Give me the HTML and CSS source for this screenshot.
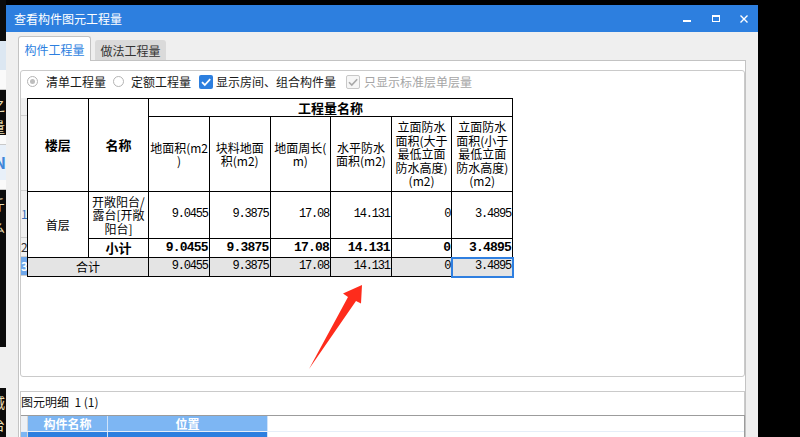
FILE: index.html
```html
<!DOCTYPE html>
<html>
<head>
<meta charset="utf-8">
<title>查看构件图元工程量</title>
<link rel="stylesheet" href="styles.css">
</head>
<body>
<div class="screen">
  <div class="desk">
    <div class="d d-black h41"></div>
    <div class="d d-light h29"></div>
    <div class="d d-white h20"></div>
    <div class="d d-black h45 glyphs"><span>之</span><span>量</span></div>
    <div class="d d-white h10"></div>
    <div class="d d-blue h35"><span class="dn">N</span></div>
    <div class="d d-white h10"></div>
    <div class="d d-black h157 glyphs"><span>斤</span><span>么</span></div>
    <div class="d d-gray h41"></div>
    <div class="d d-black fill glyphs"><span>城</span><span>台</span></div>
  </div>

  <div class="window">
    <div class="titlebar">
      <span class="title">查看构件图元工程量</span>
      <div class="controls">
        <svg class="ctl" width="8" height="8" viewBox="0 0 8 8"><rect x="0" y="5" width="8" height="2" fill="#fff"/></svg>
        <svg class="ctl" width="8" height="8" viewBox="0 0 8 8"><rect x="0.5" y="0.5" width="7" height="6" fill="none" stroke="#fff" stroke-width="1"/><rect x="0" y="0" width="8" height="2" fill="#fff"/></svg>
        <svg class="ctl" width="8" height="8" viewBox="0 0 8 8"><path d="M0.5 0.5 L7.5 7.5 M7.5 0.5 L0.5 7.5" stroke="#fff" stroke-width="1.4" fill="none"/></svg>
      </div>
    </div>

    <div class="wbody">
      <div class="tabs">
        <div class="tab active">构件工程量</div>
        <div class="tab">做法工程量</div>
      </div>

      <div class="panel">
        <div class="group">
          <div class="options">
            <span class="radio on"></span><span class="lbl l1">清单工程量</span>
            <span class="radio"></span><span class="lbl l2">定额工程量</span>
            <span class="cb on"><svg width="14" height="14" viewBox="0 0 14 14"><path d="M3 7.2 L5.8 10 L11.2 4.2" stroke="#fff" stroke-width="1.8" fill="none"/></svg></span><span class="lbl l3">显示房间、组合构件量</span>
            <span class="cb dis"><svg width="14" height="14" viewBox="0 0 14 14"><path d="M3 7.2 L5.8 10 L11.2 4.2" stroke="#a8a8a8" stroke-width="1.6" fill="none"/></svg></span><span class="lbl dis">只显示标准层单层量</span>
          </div>

          <div class="grid">
            <div class="rowhdr">
              <div class="rh h18"></div>
              <div class="rh h75"></div>
              <div class="rh h47 num1">1</div>
              <div class="rh h19">2</div>
              <div class="rh h19 selrow">3</div>
            </div>
            <table class="qt">
              <tr class="h1">
                <th rowspan="2" class="b">楼层</th>
                <th rowspan="2" class="b">名称</th>
                <th colspan="6" class="b">工程量名称</th>
              </tr>
              <tr class="h2">
                <th>地面积(m2<br>)</th>
                <th>块料地面<br>积(m2)</th>
                <th>地面周长(<br>m)</th>
                <th>水平防水<br>面积(m2)</th>
                <th>立面防水<br>面积(大于<br>最低立面<br>防水高度)<br>(m2)</th>
                <th>立面防水<br>面积(小于<br>最低立面<br>防水高度)<br>(m2)</th>
              </tr>
              <tr class="r1">
                <td rowspan="2" class="ctr">首层</td>
                <td class="ctr name">开敞阳台/<br>露台[开敞<br>阳台]</td>
                <td class="n">9.0455</td>
                <td class="n">9.3875</td>
                <td class="n">17.08</td>
                <td class="n">14.131</td>
                <td class="n">0</td>
                <td class="n">3.4895</td>
              </tr>
              <tr class="r2">
                <td class="ctr b">小计</td>
                <td class="n nb">9.0455</td>
                <td class="n nb">9.3875</td>
                <td class="n nb">17.08</td>
                <td class="n nb">14.131</td>
                <td class="n nb">0</td>
                <td class="n nb">3.4895</td>
              </tr>
              <tr class="r3">
                <td colspan="2" class="ctr">合计</td>
                <td class="n">9.0455</td>
                <td class="n">9.3875</td>
                <td class="n">17.08</td>
                <td class="n">14.131</td>
                <td class="n">0</td>
                <td class="n sel">3.4895</td>
              </tr>
            </table>
          </div>
        </div>

        <div class="splitter"></div>

        <div class="detail">
          <div class="dtitle">图元明细&nbsp;&nbsp;1 (1)</div>
          <div class="dgrid">
            <div class="drow dhead">
              <div class="dstrip"></div>
              <div class="dcell w79">构件名称</div>
              <div class="dcell w160">位置</div>
            </div>
            <div class="drow dsel">
              <div class="dstrip"></div>
              <div class="dcell w79"></div>
              <div class="dcell w160"></div>
            </div>
          </div>
        </div>
      </div>
    </div>
  </div>

  <svg class="arrow" width="800" height="437" viewBox="0 0 800 437">
    <polygon points="309,369 348,297 343,293.5 362,285 361,303.5 356,301" fill="#fe2c1c"/>
  </svg>
</div>
</body>
</html>
```

FILE: styles.css
```css
* { box-sizing: border-box; margin: 0; padding: 0; }
html, body { width: 800px; height: 437px; overflow: hidden; background: #000; }
body {
  font-family: "Noto Sans CJK SC", "Microsoft YaHei", sans-serif;
  font-size: 12px;
  color: #222;
}

.screen {
  position: relative;
  display: flex;
  width: 800px;
  height: 437px;
  background: #000;
  overflow: hidden;
}

/* desktop fragments at left edge */
.desk { width: 6px; flex: none; display: flex; flex-direction: column; overflow: hidden; }
.d { flex: none; overflow: hidden; position: relative; }
.d-black { background: #0b0b0b; }
.d-light { background: #dce7f2; }
.d-white { background: #fafafa; border-bottom: 1px solid #c9c9c9; }
.d-blue { background: #e8f0f9; }
.d-gray { background: #efefef; }
.h41 { height: 41px; }
.h29 { height: 29px; }
.h20 { height: 20px; }
.h45 { height: 45px; }
.h10 { height: 10px; }
.h35 { height: 35px; }
.h157 { height: 157px; }
.fill { flex: 1; }
.glyphs { display: flex; flex-direction: column; padding-top: 6px; gap: 6px; }
.glyphs span { display: block; margin-left: -9px; font-size: 14px; line-height: 16px; color: #e9dcb2; }
.dn { display: block; margin-left: -6px; margin-top: 8px; color: #3f86d8; font-weight: bold; font-size: 16px; line-height: 18px; }

/* window */
.window {
  width: 752px;
  flex: none;
  margin-top: 5px;
  height: 432px;
  display: flex;
  flex-direction: column;
  background: #efefef;
}
.titlebar {
  height: 27px;
  flex: none;
  background: #2d7fdf;
  color: #fff;
  display: flex;
  align-items: center;
  padding-left: 8px;
}
.title { flex: 1; font-size: 12px; line-height: 16px; }
.controls { display: flex; align-items: center; gap: 20px; margin-right: 10px; }
.controls .ctl:first-child { margin-right: 1px; }
.ctl { display: block; }

.wbody {
  flex: 1;
  min-height: 0;
  display: flex;
  flex-direction: column;
  padding: 4px 12px 0 12px;
}

.tabs {
  display: flex;
  align-items: flex-end;
  gap: 4px;
  height: 24px;
  flex: none;
  position: relative;
  z-index: 1;
}
.tab {
  width: 71px;
  height: 20px;
  background: #dadada;
  border-radius: 3px 3px 0 0;
  color: #333;
  display: flex;
  align-items: center;
  justify-content: center;
  font-size: 12px;
}
.tab.active {
  align-self: flex-start;
  width: 73px;
  height: 25px;
  background: #fff;
  border: 1px solid #c3c3c3;
  border-bottom: none;
  color: #2d7fdf;
  padding-top: 1px;
}

.panel {
  flex: 1;
  min-height: 0;
  background: #fff;
  border: 1px solid #c3c3c3;
  border-bottom: none;
  padding: 9px 0 0 1px;
  display: flex;
  flex-direction: column;
}

.group {
  height: 307px;
  flex: none;
  border: 1px solid #cacaca;
  border-radius: 3px;
  display: flex;
  flex-direction: column;
}

.options {
  height: 21px;
  margin-bottom: 6px;
  display: flex;
  align-items: center;
  padding-left: 6px;
  font-size: 12px;
  color: #1a1a1a;
}
.radio {
  width: 11px;
  height: 11px;
  border: 1px solid #b4b4b4;
  border-radius: 50%;
  background: #fff;
  position: relative;
  flex: none;
}
.radio.on::after {
  content: "";
  position: absolute;
  left: 2px; top: 2px;
  width: 5px; height: 5px;
  border-radius: 50%;
  background: #bdbdbd;
}
.lbl { line-height: 16px; white-space: nowrap; }
.l1 { margin-left: 8px; margin-right: 7px; }
.l2 { margin-left: 7px; margin-right: 8px; }
.l3 { margin-left: 3px; margin-right: 10px; }
.lbl.dis { margin-left: 4px; color: #a6a6a6; }
.cb {
  width: 14px;
  height: 14px;
  border-radius: 2px;
  flex: none;
  display: block;
}
.cb svg { display: block; }
.cb.on { background: #2d7fdf; }
.cb.dis { background: #f6f6f6; border: 1px solid #c8c8c8; }
.cb.dis svg { margin: -1px; }

.grid { display: flex; align-items: flex-start; }
.rowhdr { width: 6px; flex: none; display: flex; flex-direction: column; overflow: hidden; }
.rh {
  background: #f0f0f0;
  border-bottom: 1px solid #cfcfcf;
  font-size: 12px;
  color: #333;
  display: flex;
  align-items: center;
  overflow: hidden;
  line-height: 14px;
}
.h18 { height: 18px; }
.h75 { height: 75px; }
.h47 { height: 47px; }
.h19 { height: 19px; }
.num1 { color: #3b72b8; }
.rh.selrow { background: #6fa7ea; color: #fff; font-weight: bold; }

.qt {
  border-collapse: collapse;
  table-layout: fixed;
  width: 486px;
  font-size: 12px;
  color: #000;
}
.qt th, .qt td {
  border: 1px solid #000;
  padding: 0;
  font-weight: normal;
  text-align: center;
  vertical-align: middle;
  line-height: 13.5px;
  white-space: nowrap;
  overflow: hidden;
}
.qt .b { font-weight: bold; font-size: 13px; }
.qt tr.h1 { height: 18px; }
.qt tr.h2 { height: 75px; }
.qt tr.r1 { height: 47px; }
.qt tr.r2 { height: 19px; }
.qt tr.r3 { height: 19px; }
.qt tr.r3 td { background: #e4e4e4; }
.qt td.n {
  text-align: right;
  padding-right: 1px;
  font-family: "Liberation Mono", monospace;
  font-size: 12px;
  letter-spacing: -1.2px;
}
.qt td.nb {
  font-weight: bold;
  font-size: 13px;
  letter-spacing: -0.8px;
}
.qt td.sel {
  outline: 2px solid #2f7fe0;
  outline-offset: -1px;
}

.splitter { height: 14px; flex: none; }

.detail {
  flex: 1;
  min-height: 0;
  border: 1px solid #cacaca;
  border-bottom: none;
  display: flex;
  flex-direction: column;
}
.dtitle {
  height: 23px;
  flex: none;
  padding-top: 1px;
  line-height: 17px;
  font-size: 12px;
  color: #111;
  white-space: nowrap;
}
.dgrid {
  flex: 1;
  border-top: 1px solid #9c9c9c;
  border-right: 1px solid #9c9c9c;
  margin-right: -1px;
}
.drow { display: flex; }
.dhead { height: 16px; border-bottom: 1px solid #e6eef8; }
.dstrip { width: 7px; flex: none; background: #eef1f5; border-right: 1px solid #d6d6d6; }
.dcell {
  flex: none;
  background: #7db6f3;
  color: #fff;
  font-weight: bold;
  font-size: 12px;
  line-height: 16px;
  text-align: center;
  border-right: 1px solid #cfe3fa;
}
.w79 { width: 80px; }
.w160 { width: 160px; }
.dsel { height: 10px; }
.dsel .dstrip { background: #7db6f3; }
.dsel .dcell { background: #2d7fdf; }

.arrow { position: absolute; left: 0; top: 0; pointer-events: none; }
```
